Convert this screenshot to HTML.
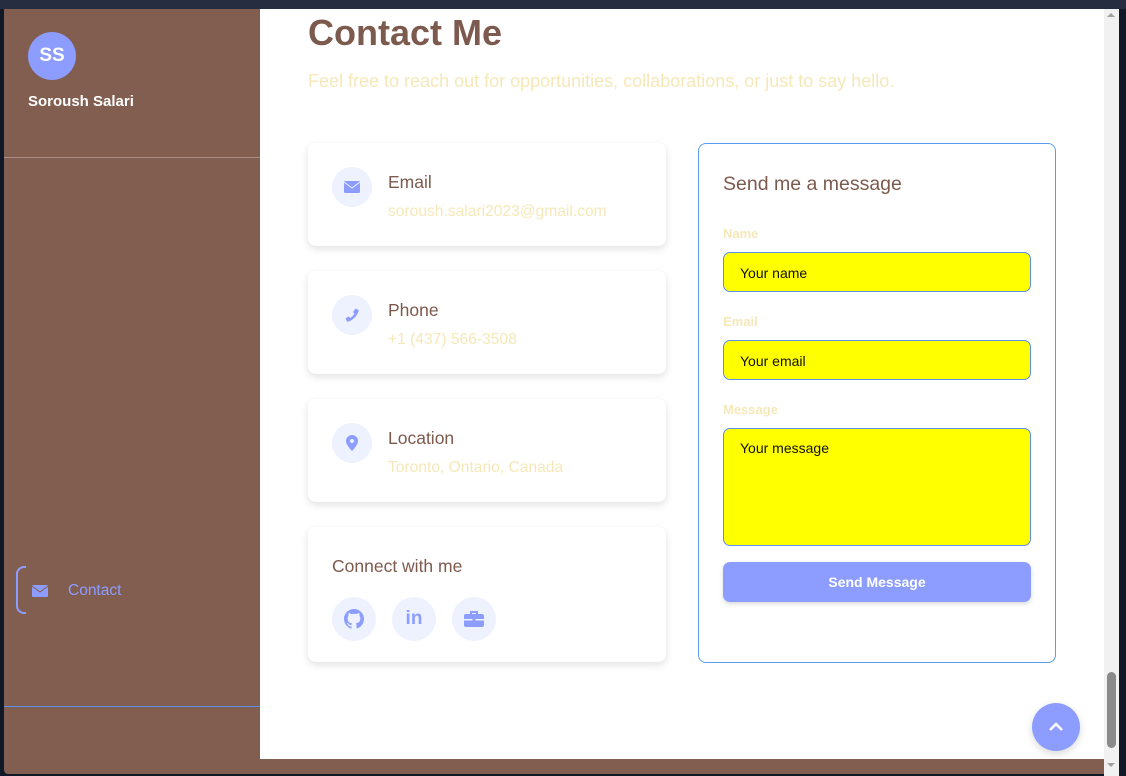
<!DOCTYPE html>
<html><head><meta charset="utf-8"><style>
*{box-sizing:border-box;margin:0;padding:0}
body{width:1126px;height:776px;overflow:hidden;background:#111827;font-family:"Liberation Sans",sans-serif;position:relative}
.top{position:absolute;left:0;top:0;width:1126px;height:9px;background:#272d40}
.side{position:absolute;left:4px;top:9px;width:256px;height:765px;background:#825e50;border-radius:0 0 0 4px}
.av{position:absolute;left:24px;top:23px;width:48px;height:48px;border-radius:50%;background:#8c9dff;color:#fff;font-weight:bold;font-size:19px;text-align:center;line-height:48px}
.nm{position:absolute;left:24px;top:84px;color:#fff;font-weight:bold;font-size:15px}
.hr1{position:absolute;left:0;top:148px;width:256px;height:1px;background:#a98c86}
.hr2{position:absolute;left:0;top:697px;width:256px;height:1px;background:#5b8ff0}
.nav{position:absolute;left:12px;top:557px;width:10px;height:48px;border:2px solid #8c9dff;border-right:none;border-radius:8px 0 0 8px}
.navt{position:absolute;left:64px;top:573px;color:#8c9dff;font-size:15.5px}
.main{position:absolute;left:260px;top:9px;width:844px;height:750px;background:#fff}
.bot{position:absolute;left:260px;top:759px;width:844px;height:15px;background:#825e50}
.sb{position:absolute;left:1104px;top:9px;width:15px;height:767px;background:#f1f1f1}
.thumb{position:absolute;left:1107px;top:672px;width:9px;height:76px;background:#8a8a8a;border-radius:5px}
h1{position:absolute;left:308px;top:12px;font-size:36px;color:#7d5a4e;font-weight:bold}
.sub{position:absolute;left:308px;top:71px;font-size:18px;color:#f5e8b8}
.card{position:absolute;left:308px;width:358px;background:#fff;border-radius:8px;box-shadow:0 3px 8px rgba(0,0,0,.12)}
.ic{position:absolute;left:24px;top:24px;width:40px;height:40px;border-radius:50%;background:#eef2ff;display:flex;align-items:center;justify-content:center}
.ct{position:absolute;left:80px;top:29px;font-size:17.5px;color:#7d5a4e}
.cv{position:absolute;left:80px;top:60px;font-size:15.6px;color:#f5e8b8}
.soc{position:absolute;top:70px;width:44px;height:44px;border-radius:50%;background:#eef2ff;display:flex;align-items:center;justify-content:center}
.form{position:absolute;left:698px;top:143px;width:358px;height:520px;border:1px solid #5b9cf0;border-radius:8px;background:#fff}
.lb{position:absolute;left:24px;font-size:13px;color:#f5e8b8;font-weight:bold}
.in{position:absolute;left:24px;width:308px;height:40px;background:#ff0;border:1px solid #5b8ff0;border-radius:7px;font-size:14px;padding:12px 16px;color:#111}
.btn{position:absolute;left:24px;top:418px;width:308px;height:40px;background:#8c9dff;border-radius:7px;color:#fff;font-weight:bold;font-size:14px;text-align:center;line-height:40px;box-shadow:0 2px 5px rgba(0,0,0,.15)}
.up{position:absolute;left:1032px;top:703px;width:48px;height:48px;border-radius:50%;background:#8c9dff;box-shadow:0 3px 8px rgba(0,0,0,.15);display:flex;align-items:center;justify-content:center}
</style></head><body>
<div class="top"></div>
<div class="side">
<div class="av">SS</div><div class="nm">Soroush Salari</div>
<div class="hr1"></div>
<div class="nav"></div>
<svg style="position:absolute;left:28px;top:576px" width="16" height="12" viewBox="0 0 16 12"><rect width="16" height="12" rx="1" fill="#8c9dff"/><path d="M0 1l8 6 8-6" stroke="#825e50" stroke-width="1" fill="none"/></svg>
<div class="navt">Contact</div>
<div class="hr2"></div>
</div>
<div class="main"></div>
<div class="bot"></div>
<div class="sb"></div><div class="thumb"></div>
<svg style="position:absolute;left:1106px;top:12px" width="10" height="6" viewBox="0 0 10 6"><path d="M1 5l4-4 4 4z" fill="#a0a0a0"/></svg>
<svg style="position:absolute;left:1106px;top:762px" width="10" height="6" viewBox="0 0 10 6"><path d="M1 1l4 4 4-4z" fill="#a0a0a0"/></svg>
<h1>Contact Me</h1>
<div class="sub">Feel free to reach out for opportunities, collaborations, or just to say hello.</div>

<div class="card" style="top:143px;height:103px"><div class="ic"><svg width="16" height="12" viewBox="0 0 16 12"><rect width="16" height="12" rx="1" fill="#8c9dff"/><path d="M0 1l8 6 8-6" stroke="#eef2ff" stroke-width="1" fill="none"/></svg></div><div class="ct">Email</div><div class="cv">soroush.salari2023@gmail.com</div></div>
<div class="card" style="top:271px;height:103px"><div class="ic"><svg width="16" height="16" viewBox="0 0 16 16"><path d="M11.5 1.5l2.5 1.2c.6.3.8.9.6 1.5C13 9 9 13 4.2 14.6c-.6.2-1.2 0-1.5-.6L1.5 11.5l3-2 1.6 1.4c1.8-1 3.3-2.5 4.3-4.3L9 5z" fill="#8c9dff"/></svg></div><div class="ct">Phone</div><div class="cv">+1 (437) 566-3508</div></div>
<div class="card" style="top:399px;height:103px"><div class="ic"><svg width="12" height="16" viewBox="0 0 12 16"><path d="M6 0a6 6 0 0 1 6 6c0 4-6 10-6 10S0 10 0 6a6 6 0 0 1 6-6z" fill="#8c9dff"/><circle cx="6" cy="6" r="2" fill="#eef2ff"/></svg></div><div class="ct">Location</div><div class="cv">Toronto, Ontario, Canada</div></div>
<div class="card" style="top:527px;height:135px">
<div class="ct" style="left:24px;top:29px">Connect with me</div>
<div class="soc" style="left:24px"><svg width="20" height="20" viewBox="0 0 16 16"><path fill="#8c9dff" d="M8 0C3.6 0 0 3.6 0 8c0 3.5 2.3 6.5 5.5 7.6.4.1.5-.2.5-.4v-1.4c-2.2.5-2.7-1-2.7-1-.4-.9-.9-1.2-.9-1.2-.7-.5.1-.5.1-.5.8.1 1.200.8 1.2.8.7 1.2 1.9.9 2.3.7.1-.5.3-.9.5-1.1-1.8-.2-3.6-.9-3.6-4 0-.9.3-1.6.8-2.1-.1-.2-.4-1 .1-2.1 0 0 .7-.2 2.2.8.6-.2 1.3-.3 2-.3s1.4.1 2 .3c1.5-1 2.2-.8 2.2-.8.4 1.1.2 1.9.1 2.1.5.6.8 1.3.8 2.1 0 3.1-1.900 3.7-3.6 3.9.3.3.5.8.5 1.5v2.2c0 .2.1.5.6.4C13.7 14.5 16 11.5 16 8c0-4.4-3.6-8-8-8z"/></svg></div>
<div class="soc" style="left:84px;color:#8c9dff;font-weight:bold;font-size:19px">in</div>
<div class="soc" style="left:144px"><svg width="20" height="18" viewBox="0 0 20 18"><rect x="0" y="4" width="20" height="13" rx="2" fill="#8c9dff"/><path d="M7 4V2h6v2" stroke="#8c9dff" stroke-width="2" fill="none"/><rect x="0" y="9" width="20" height="1.5" fill="#eef2ff"/><rect x="8.5" y="8" width="3" height="4" fill="#8c9dff"/></svg></div>
</div>

<div class="form">
<div style="position:absolute;left:24px;top:29px;font-size:19.5px;color:#7d5a4e">Send me a message</div>
<div class="lb" style="top:82px">Name</div>
<div class="in" style="top:108px">Your name</div>
<div class="lb" style="top:170px">Email</div>
<div class="in" style="top:196px">Your email</div>
<div class="lb" style="top:258px">Message</div>
<div class="in" style="top:284px;height:118px;padding-top:11px">Your message</div>
<div class="btn">Send Message</div>
</div>
<div class="up"><svg width="16" height="10" viewBox="0 0 16 10"><path d="M2 8l6-6 6 6" stroke="#fff" stroke-width="2.5" fill="none"/></svg></div>
</body></html>
